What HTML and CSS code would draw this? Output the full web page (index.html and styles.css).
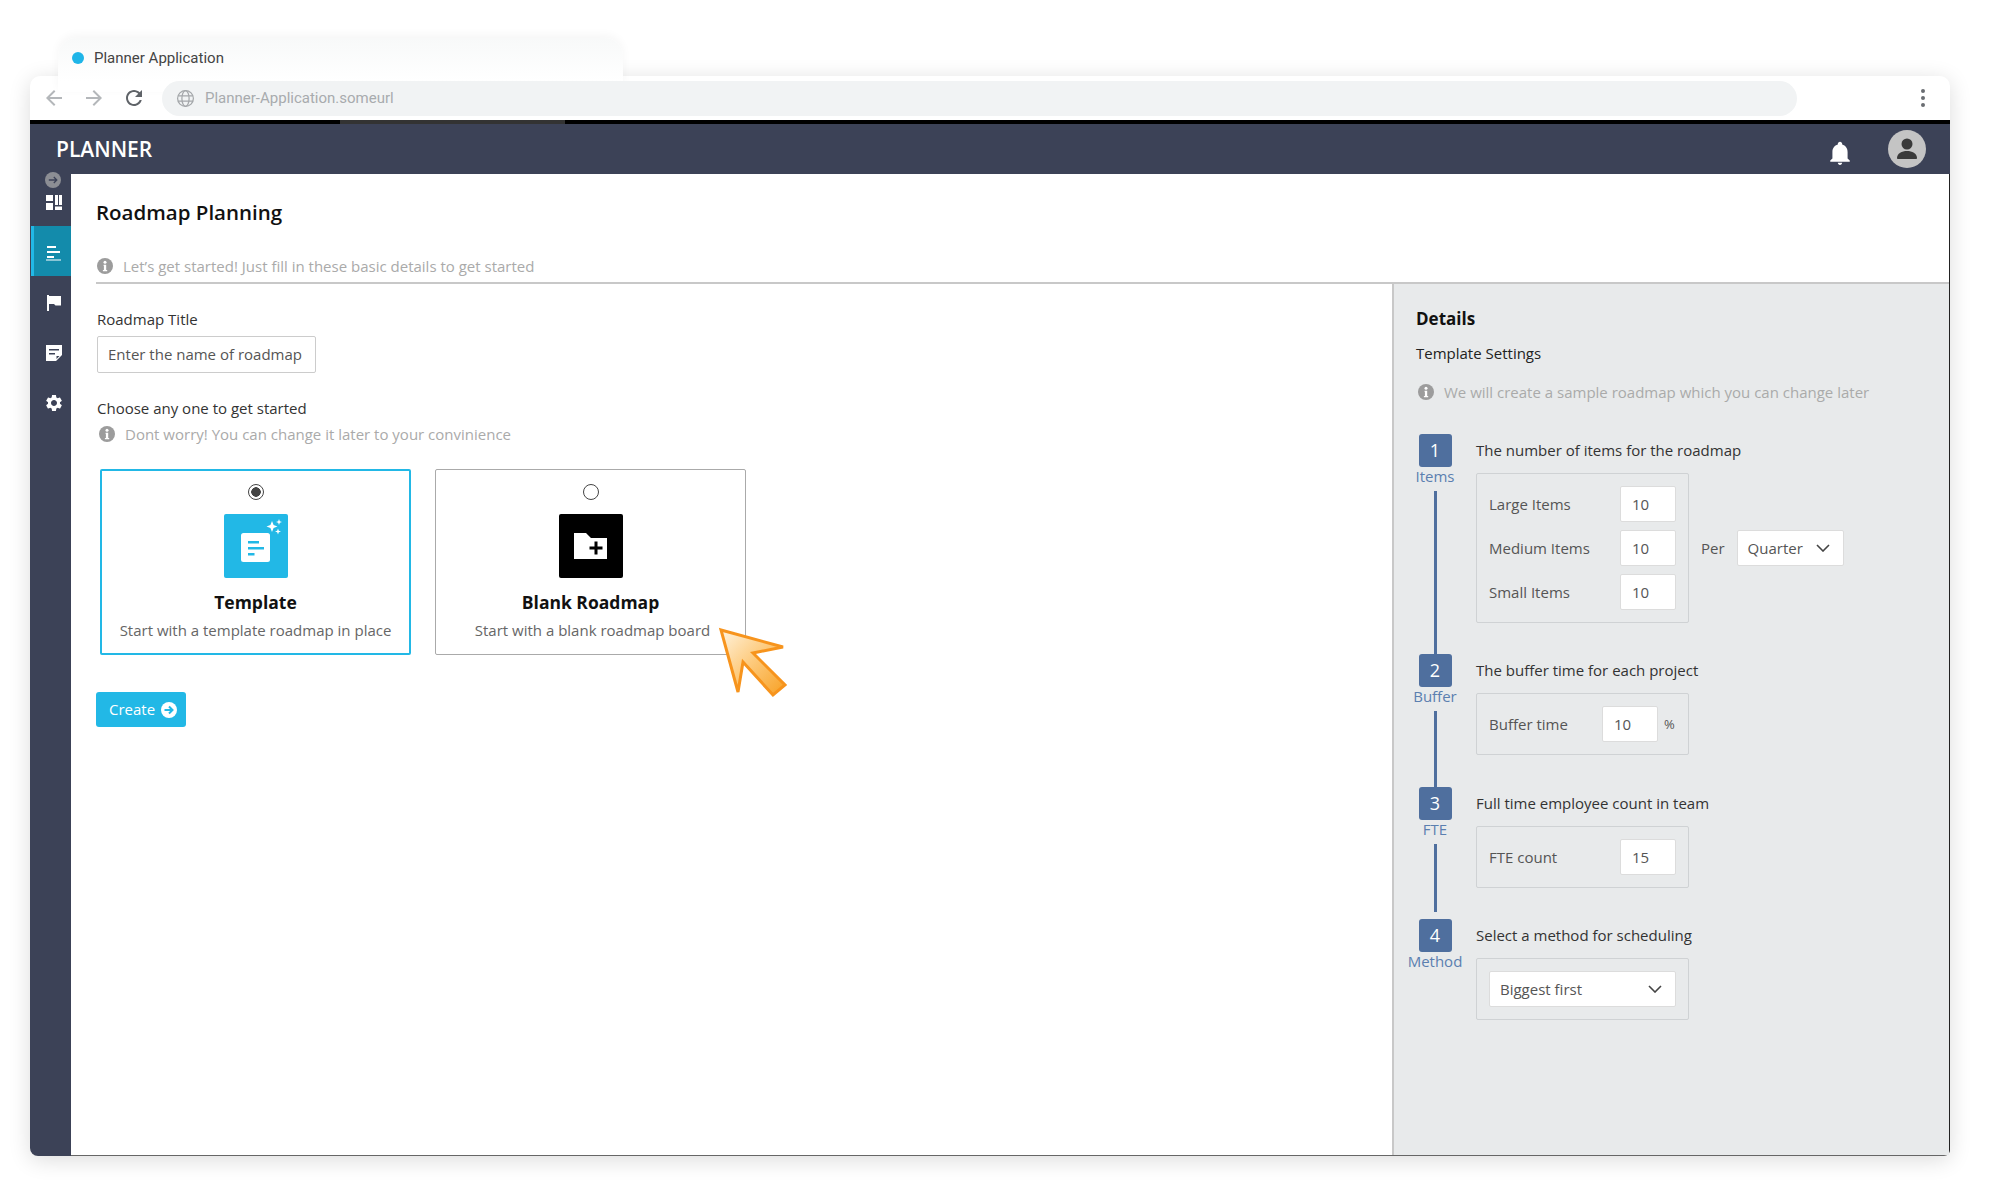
FILE: index.html
```html
<!DOCTYPE html>
<html lang="en">
<head>
  <meta charset="UTF-8" />
  <title>Planner Application</title>
  <link rel="stylesheet" href="styles.css">
</head>
<body>

  <!-- Browser tab -->
  <div class="tab">
    <span class="tab-dot"></span>
    <span class="tab-title">Planner Application</span>
  </div>

  <div class="window">

    <!-- Browser toolbar -->
    <div class="toolbar">
      <svg class="nav-icon" viewBox="0 0 24 24"><path fill="#b4b7ba" d="M20 11H7.83l5.59-5.59L12 4l-8 8 8 8 1.41-1.41L7.83 13H20v-2z"/></svg>
      <svg class="nav-icon" viewBox="0 0 24 24"><path fill="#b4b7ba" d="M12 4l-1.41 1.41L16.17 11H4v2h12.17l-5.58 5.59L12 20l8-8z"/></svg>
      <svg class="nav-icon" viewBox="0 0 24 24"><path fill="#5f6368" d="M17.65 6.35C16.2 4.9 14.21 4 12 4c-4.42 0-7.99 3.58-7.99 8s3.57 8 7.99 8c3.73 0 6.84-2.55 7.73-6h-2.08c-.82 2.33-3.04 4-5.65 4-3.31 0-6-2.69-6-6s2.69-6 6-6c1.66 0 3.14.69 4.22 1.78L13 11h7V4l-2.35 2.35z"/></svg>
      <div class="urlbar">
        <svg class="globe" viewBox="0 0 20 20" fill="none" stroke="#a4a7aa" stroke-width="1.3">
          <circle cx="10" cy="10" r="8.3"/>
          <ellipse cx="10" cy="10" rx="3.8" ry="8.3"/>
          <path d="M2 7.2h16M2 12.8h16"/>
        </svg>
        <span>Planner-Application.someurl</span>
      </div>
      <div class="menu-dots"><i></i><i></i><i></i></div>
    </div>
    <div class="black-bar"></div>

    <!-- App header -->
    <header class="app-header">
      <div class="logo">PLANNER</div>
      <svg class="bell" viewBox="0 0 24 24"><path fill="#fff" d="M12 23c1.1 0 2-.9 2-2h-4c0 1.1.9 2 2 2zm7-6v-6c0-3.3-1.9-6-5-6.8V3.5C14 2.4 13.1 1.500 12 1.500S10 2.400 10 3.500v.7C6.900 5 5 7.700 5 11v6l-2 2v1h18v-1l-2-2z"/></svg>
      <svg class="avatar" viewBox="0 0 38 38">
        <circle cx="19" cy="19" r="19" fill="#c4c4c4"/>
        <circle cx="19" cy="14" r="5.500" fill="#3a3a3a"/>
        <path fill="#3a3a3a" d="M9 28c0-4.500 5-7 10-7s10 2.500 10 7c0 .8-.5 1-1 1H10c-.5 0-1-.2-1-1z"/>
      </svg>
    </header>

    <div class="app-body">

      <!-- Sidebar -->
      <nav class="sidebar">
        <svg class="collapse" viewBox="0 0 16 16">
          <circle cx="8" cy="8" r="8" fill="#8c8e94"/>
          <path fill="none" stroke="#3c4257" stroke-width="1.300" d="M3.800 8h8M8.800 5l3 3-3 3"/>
        </svg>
        <div class="side-item side-first">
          <svg viewBox="0 0 16 16" class="side-icon"><path fill="#fff" d="M0 0h7v6H0zM0 8h7v7H0zM9 0h3v10H9zM13 0h3v10h-3zM9 11.500h7V15H9z"/></svg>
        </div>
        <div class="side-item active">
          <svg viewBox="0 0 16 16" class="side-icon"><path fill="#fff" d="M1 1h9v2H1zM1 6h13v2H1zM1 11h7v2H1zM0 14.500h15V15.500H0z"/></svg>
        </div>
        <div class="side-item">
          <svg viewBox="0 0 16 16" class="side-icon"><path fill="#fff" d="M1 0h2v16H1zM3 1h12v9.500H9.500L8 9H3z"/></svg>
        </div>
        <div class="side-item">
          <svg viewBox="0 0 16 16" class="side-icon"><path fill="#fff" fill-rule="evenodd" d="M0 0h16v10l-6 6H0zM3 4v1.500h10V4zM3 8v1.500h6V8zM10.500 11v3l3-3z"/></svg>
        </div>
        <div class="side-item side-gear">
          <svg viewBox="0 0 24 24" class="side-icon"><path fill="#fff" d="M19.140,12.940c0.040-0.300,0.060-0.610,0.060-0.940c0-0.320-0.020-0.640-0.070-0.940l2.030-1.580c0.180-0.140,0.230-0.410,0.120-0.610l-1.920-3.320c-0.120-0.220-0.370-0.290-0.590-0.220l-2.390,0.960c-0.500-0.380-1.030-0.700-1.620-0.940L14.400,2.810c-0.040-0.240-0.240-0.410-0.480-0.410h-3.840c-0.240,0-0.430,0.170-0.470,0.410L9.250,5.350C8.660,5.590,8.120,5.920,7.630,6.290L5.240,5.330c-0.220-0.080-0.470,0-0.590,0.220L2.740,8.870C2.620,9.080,2.660,9.340,2.860,9.480l2.030,1.580C4.840,11.360,4.800,11.690,4.800,12s0.020,0.640,0.070,0.940l-2.030,1.580c-0.180,0.140-0.230,0.410-0.120,0.610l1.920,3.320c0.120,0.220,0.370,0.290,0.590,0.220l2.390-0.960c0.500,0.380,1.030,0.700,1.620,0.940l0.360,2.540c0.050,0.240,0.240,0.410,0.480,0.410h3.840c0.240,0,0.440-0.170,0.470-0.410l0.360-2.540c0.590-0.240,1.130-0.560,1.620-0.940l2.390,0.960c0.220,0.080,0.470,0,0.590-0.220l1.920-3.320c0.120-0.220,0.070-0.470-0.120-0.610L19.140,12.940z M12,15.600c-1.980,0-3.600-1.620-3.600-3.600s1.620-3.600,3.600-3.600s3.600,1.620,3.600,3.600S13.980,15.600,12,15.600z"/></svg>
        </div>
      </nav>

      <main class="content">
        <div class="page-head">
          <h1>Roadmap Planning</h1>
          <div class="hint head-hint">
            <svg class="info" viewBox="0 0 16 16"><circle cx="8" cy="8" r="8" fill="#9c9c9c"/><circle cx="8" cy="4.200" r="1.500" fill="#fff"/><path fill="#fff" d="M6.600 6.800h2.600v5.200h1v1.200H5.900V12h1V8H6.600z"/></svg>
            <span>Let’s get started! Just fill in these basic details to get started</span>
          </div>
        </div>

        <div class="panes">
          <!-- Left pane -->
          <section class="form-pane">
            <div class="form-label">Roadmap Title</div>
            <div class="title-input">Enter the name of roadmap</div>

            <div class="form-label choose-label">Choose any one to get started</div>
            <div class="hint choose-hint">
              <svg class="info" viewBox="0 0 16 16"><circle cx="8" cy="8" r="8" fill="#9c9c9c"/><circle cx="8" cy="4.200" r="1.500" fill="#fff"/><path fill="#fff" d="M6.600 6.800h2.600v5.200h1v1.200H5.900V12h1V8H6.600z"/></svg>
              <span>Dont worry! You can change it later to your convinience</span>
            </div>

            <div class="cards">
              <div class="card selected">
                <span class="radio checked"></span>
                <svg class="card-icon" viewBox="0 0 64 64">
                  <rect width="64" height="64" rx="2" fill="#22b8e6"/>
                  <rect x="17" y="19" width="29" height="29" rx="2.500" fill="#fff"/>
                  <path fill="#22b8e6" d="M24 27h11v2.500H24zM24 33h16v2.500H24zM24 39h6.500v2.500H24z"/>
                  <path fill="#fff" d="M48 7l1.600 3.900L53.500 12.500l-3.900 1.600L48 18l-1.600-3.900-3.900-1.600 3.900-1.600zM55 5l.8 2.200L58 8l-2.200.8L55 11l-.8-2.200L52 8l2.200-.8zM54 14.500l.8 2.200 2.200.8-2.200.8-.8 2.200-.8-2.200-2.200-.8 2.200-.8z"/>
                </svg>
                <div class="card-title">Template</div>
                <div class="card-text">Start with a template roadmap in place</div>
              </div>
              <div class="card">
                <span class="radio"></span>
                <svg class="card-icon" viewBox="0 0 64 64">
                  <rect width="64" height="64" rx="2" fill="#000"/>
                  <path fill="#fff" d="M15 19h12l5 5h16v21H15z"/>
                  <path fill="none" stroke="#000" stroke-width="3" d="M30.500 34h13M37 27.500v13"/>
                </svg>
                <div class="card-title">Blank Roadmap</div>
                <div class="card-text card-text-blank">Start with a blank roadmap board</div>
              </div>
            </div>

            <button class="create-btn">
              <span>Create</span>
              <svg class="create-arrow" viewBox="0 0 16 16">
                <circle cx="8" cy="8" r="8" fill="#fff"/>
                <path fill="none" stroke="#22b8e6" stroke-width="2" d="M3.500 8h8M8 4.500 11.500 8 8 11.500"/>
              </svg>
            </button>

            <!-- Mouse pointer lying over the cards -->
            <svg class="pointer" viewBox="0 0 72 72">
              <defs>
                <linearGradient id="pointerFill" x1="0" y1="0" x2="1" y2="1">
                  <stop offset="0" stop-color="#fff3dd"/>
                  <stop offset="0.500" stop-color="#fdc97a"/>
                  <stop offset="1" stop-color="#f7a023"/>
                </linearGradient>
              </defs>
              <path fill="url(#pointerFill)" stroke="#f7941d" stroke-width="3" stroke-linejoin="miter" d="M4 4 66 21 36 27 68 59 56 69 26 36 21 66z"/>
            </svg>
          </section>

          <!-- Right pane -->
          <aside class="details">
            <h2>Details</h2>
            <div class="details-sub">Template Settings</div>
            <div class="hint details-hint">
              <svg class="info" viewBox="0 0 16 16"><circle cx="8" cy="8" r="8" fill="#9c9c9c"/><circle cx="8" cy="4.200" r="1.500" fill="#fff"/><path fill="#fff" d="M6.600 6.800h2.600v5.200h1v1.200H5.900V12h1V8H6.600z"/></svg>
              <span>We will create a sample roadmap which you can change later</span>
            </div>

            <div class="steps">
              <div class="step">
                <div class="step-side">
                  <div class="badge">1</div>
                  <div class="step-name">Items</div>
                  <div class="step-line"></div>
                </div>
                <div class="step-main">
                  <div class="step-title">The number of items for the roadmap</div>
                  <div class="step-row">
                    <div class="box">
                      <div class="row"><span>Large Items</span><div class="num">10</div></div>
                      <div class="row"><span>Medium Items</span><div class="num">10</div></div>
                      <div class="row"><span>Small Items</span><div class="num">10</div></div>
                    </div>
                    <span class="per">Per</span>
                    <div class="select select-small">
                      <span>Quarter</span>
                      <svg class="chevron" viewBox="0 0 14 8"><path fill="none" stroke="#444" stroke-width="1.600" d="M1 1l6 6 6-6"/></svg>
                    </div>
                  </div>
                </div>
              </div>

              <div class="step">
                <div class="step-side">
                  <div class="badge">2</div>
                  <div class="step-name">Buffer</div>
                  <div class="step-line"></div>
                </div>
                <div class="step-main">
                  <div class="step-title">The buffer time for each project</div>
                  <div class="box">
                    <div class="row"><span class="row-grow">Buffer time</span><div class="num">10</div><span class="unit">%</span></div>
                  </div>
                </div>
              </div>

              <div class="step">
                <div class="step-side">
                  <div class="badge">3</div>
                  <div class="step-name">FTE</div>
                  <div class="step-line line-short"></div>
                </div>
                <div class="step-main">
                  <div class="step-title">Full time employee count in team</div>
                  <div class="box">
                    <div class="row"><span>FTE count</span><div class="num">15</div></div>
                  </div>
                </div>
              </div>

              <div class="step">
                <div class="step-side">
                  <div class="badge">4</div>
                  <div class="step-name">Method</div>
                </div>
                <div class="step-main">
                  <div class="step-title">Select a method for scheduling</div>
                  <div class="box">
                    <div class="select">
                      <span>Biggest first</span>
                      <svg class="chevron" viewBox="0 0 14 8"><path fill="none" stroke="#444" stroke-width="1.600" d="M1 1l6 6 6-6"/></svg>
                    </div>
                  </div>
                </div>
              </div>
            </div>
          </aside>
        </div>
      </main>
    </div>
  </div>

</body>
</html>
```

FILE: styles.css
```css
html, body {
  margin: 0;
  padding: 0;
  background: #fff;
  font-family: "Open Sans", sans-serif;
  font-size: 15px;
  color: #333;
}

body {
  width: 2000px;
  height: 1200px;
  overflow: hidden;
  padding-top: 38px;
  box-sizing: border-box;
}

/* Browser tab */
.tab {
  position: relative;
  z-index: 1;
  display: flex;
  align-items: flex-start;
  gap: 10px;
  width: 565px;
  height: 54px;
  margin: 0 0 -16px 58px;
  padding: 12px 0 0 14px;
  box-sizing: border-box;
  border-radius: 18px 18px 0 0;
  background: linear-gradient(#f8f9f9, #fff 80%);
  box-shadow: 0 -3px 10px rgba(0, 0, 0, 0.04);
  font-family: Roboto, sans-serif;
  color: #444;
}

.tab-dot {
  width: 12px;
  height: 12px;
  margin-top: 2px;
  border-radius: 50%;
  background: #1fb5e8;
}

.tab-title {
  line-height: 16px;
}

/* Browser window */
.window {
  display: flex;
  flex-direction: column;
  width: 1920px;
  height: 1080px;
  margin-left: 30px;
  border-radius: 10px 10px 8px 8px;
  background: #fff;
  box-shadow: 0 4px 22px rgba(0, 0, 0, 0.14);
}

.toolbar {
  position: relative;
  z-index: 2;
  display: flex;
  align-items: center;
  height: 44px;
  padding-left: 12px;
  box-sizing: border-box;
}

.nav-icon {
  width: 24px;
  height: 24px;
  margin-right: 16px;
  flex: none;
}

.urlbar {
  display: flex;
  align-items: center;
  gap: 10px;
  width: 1635px;
  height: 35px;
  padding-left: 14px;
  box-sizing: border-box;
  border-radius: 18px;
  background: #f1f3f4;
  font-family: Roboto, sans-serif;
  color: #a8abae;
}

.globe {
  width: 19px;
  height: 19px;
}

.menu-dots {
  display: flex;
  flex-direction: column;
  gap: 3px;
  margin-left: 124px;
}

.menu-dots i {
  width: 4px;
  height: 4px;
  border-radius: 50%;
  background: #6a6d72;
}

.black-bar {
  height: 4px;
  background: linear-gradient(90deg, #000 310px, #333 310px, #333 535px, #000 535px);
}

.app-header {
  display: flex;
  align-items: center;
  height: 50px;
  padding: 0 24px 0 26px;
  box-sizing: border-box;
  background: #3c4257;
}

.logo {
  flex: 1;
  font-size: 21px;
  font-weight: 600;
  color: #fff;
}

.bell {
  width: 26px;
  height: 26px;
  margin: 7px 35px 0 0;
}

.avatar {
  width: 38px;
  height: 38px;
  margin-top: -1px;
}

.app-body {
  flex: 1;
  display: flex;
  min-height: 0;
}

/* Sidebar */
.sidebar {
  display: flex;
  flex-direction: column;
  width: 41px;
  flex: none;
  background: #3c4257;
  border-radius: 0 0 0 8px;
}

.collapse {
  width: 16px;
  height: 16px;
  margin: -2px 0 0 15px;
}

.side-item {
  display: flex;
  align-items: center;
  height: 50px;
  padding: 4px 0 0 16px;
  box-sizing: border-box;
}

.side-first {
  height: 16px;
  padding-top: 0;
  margin: 7px 0 15px;
}

.side-item.active {
  margin-left: 1px;
  padding-left: 12px;
  border-left: 3px solid #22b8e6;
  background: #138bab;
}

.side-icon {
  width: 16px;
  height: 16px;
}

.side-gear {
  padding-left: 14px;
}

.side-gear .side-icon {
  width: 20px;
  height: 20px;
}

/* Main area */
.content {
  flex: 1;
  display: flex;
  flex-direction: column;
  min-width: 0;
  border-right: 1px solid #222;
  border-bottom: 1px solid #666;
  border-radius: 0 0 6px 0;
}

.page-head {
  height: 110px;
  margin-left: 25px;
  padding-top: 24px;
  box-sizing: border-box;
  border-bottom: 2px solid #c8c8c8;
}

h1 {
  margin: 0 0 30px;
  font-size: 20.500px;
  line-height: 28px;
  font-weight: 600;
  color: #111;
}

.hint {
  display: flex;
  align-items: center;
  gap: 10px;
  line-height: 20px;
  color: #aaa;
}

.head-hint {
  margin-left: 1px;
}

.info {
  width: 16px;
  height: 16px;
  flex: none;
}

.panes {
  flex: 1;
  display: flex;
  min-height: 0;
}

.form-pane {
  position: relative;
  flex: 1;
  padding: 25px 0 0 26px;
}

.form-label {
  line-height: 20px;
  color: #333;
}

.title-input {
  width: 219px;
  height: 37px;
  margin-top: 7px;
  padding-left: 10px;
  box-sizing: border-box;
  border: 1px solid #ccc;
  border-radius: 2px;
  line-height: 35px;
  color: #555;
}

.choose-label {
  margin-top: 25px;
}

.choose-hint {
  margin: 6px 0 0 2px;
}

.cards {
  display: flex;
  gap: 24px;
  margin: 25px 0 0 3px;
}

.card {
  display: flex;
  flex-direction: column;
  align-items: center;
  width: 311px;
  height: 186px;
  padding-top: 14px;
  box-sizing: border-box;
  border: 1px solid #aaa;
  border-radius: 2px;
}

.card.selected {
  border: 2px solid #22b8e6;
  padding-top: 13px;
}

.radio {
  width: 16px;
  height: 16px;
  box-sizing: border-box;
  border: 1px solid #444;
  border-radius: 50%;
  flex: none;
  background: #fff;
}

.radio.checked {
  background: radial-gradient(circle, #444 0 4.500px, #fff 5px);
}

.card-icon {
  width: 64px;
  height: 64px;
  margin-top: 14px;
  flex: none;
}

.card-title {
  margin-top: 12px;
  font-size: 17.500px;
  line-height: 24px;
  font-weight: 700;
  color: #111;
}

.card-text {
  margin-top: 6px;
  line-height: 20px;
  color: #666;
}

.card-text-blank {
  margin-left: 4px;
}

.create-btn {
  display: flex;
  align-items: center;
  gap: 6px;
  width: 90px;
  height: 35px;
  margin: 37px 0 0 -1px;
  padding: 0 0 2px 13px;
  border: none;
  border-radius: 3px;
  background: #22b8e6;
  font-family: inherit;
  font-size: 15px;
  color: #fff;
}

.create-arrow {
  width: 16px;
  height: 16px;
  margin-top: 2px;
}

.pointer {
  position: absolute;
  top: 342px;
  left: 646px;
  width: 72px;
  height: 72px;
}

/* Details pane */
.details {
  width: 557px;
  flex: none;
  padding: 23px 0 0 22px;
  box-sizing: border-box;
  border-left: 2px solid #c8c8c8;
  background: #e8eaeb;
}

h2 {
  margin: 0;
  font-size: 17px;
  line-height: 24px;
  font-weight: 700;
  color: #111;
}

.details-sub {
  margin-top: 12px;
  line-height: 20px;
  color: #222;
}

.details-hint {
  margin: 19px 0 0 2px;
}

.steps {
  margin: 32px 0 0 -14px;
}

.step {
  display: flex;
  gap: 8px;
}

.step-side {
  display: flex;
  flex-direction: column;
  align-items: center;
  width: 66px;
  flex: none;
}

.badge {
  width: 33px;
  height: 33px;
  flex: none;
  border-radius: 3px;
  background: #4f6f9e;
  color: #fff;
  font-size: 18px;
  line-height: 33px;
  text-align: center;
}

.step-name {
  margin-top: -1px;
  line-height: 20px;
  color: #5b7fb0;
  white-space: nowrap;
}

.step-line {
  flex: 1;
  width: 3px;
  margin-top: 5px;
  background: #4f6f9e;
}

.step-line.line-short {
  margin-bottom: 7px;
}

.step-main {
  padding-bottom: 31.500px;
}

.step:first-child .step-main {
  padding-bottom: 31px;
}

.step-title {
  height: 39px;
  padding-top: 6px;
  box-sizing: border-box;
  line-height: 20px;
  color: #333;
}

.step-row {
  display: flex;
  align-items: center;
  gap: 12px;
}

.box {
  display: flex;
  flex-direction: column;
  gap: 8px;
  width: 213px;
  padding: 12px;
  box-sizing: border-box;
  border: 1px solid #cfd2d4;
  border-radius: 2px;
  color: #555;
}

.row {
  display: flex;
  align-items: center;
  justify-content: space-between;
}

.row-grow {
  flex: 1;
}

.num {
  width: 56px;
  height: 36px;
  padding-left: 11px;
  box-sizing: border-box;
  border: 1px solid #dcdcdc;
  border-radius: 2px;
  background: #fff;
  line-height: 34px;
  color: #555;
}

.unit {
  width: 12px;
  margin-left: 6px;
  font-size: 13px;
}

.per {
  color: #555;
}

.select {
  display: flex;
  align-items: center;
  justify-content: space-between;
  height: 36px;
  padding: 0 13px 0 10px;
  box-sizing: border-box;
  border: 1px solid #dcdcdc;
  border-radius: 2px;
  background: #fff;
  color: #555;
}

.select-small {
  width: 107px;
}

.chevron {
  width: 14px;
  height: 8px;
}
```
